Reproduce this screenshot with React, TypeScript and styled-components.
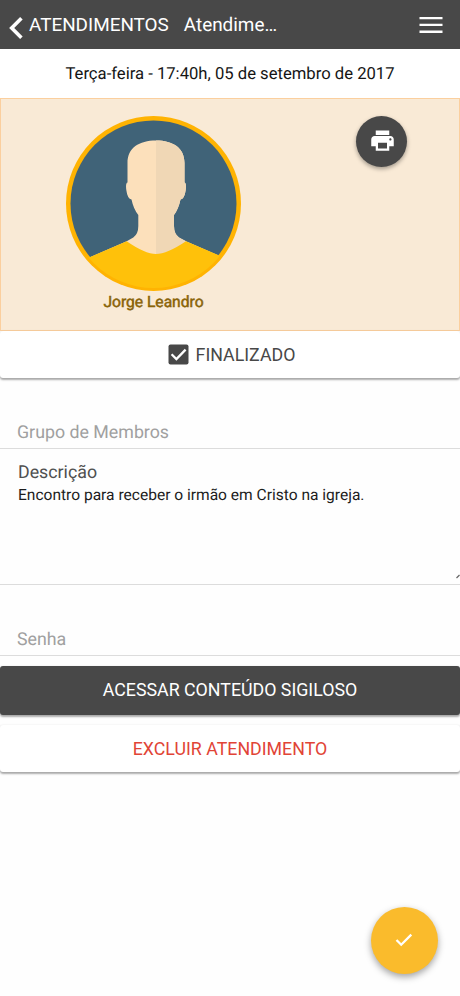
import React from "react";
import styled, { createGlobalStyle } from "styled-components";

const Global = createGlobalStyle`
  *, *::before, *::after { box-sizing: border-box; }
  html, body { margin: 0; padding: 0; background: #fff; }
  body { font-family: Roboto, "Liberation Sans", sans-serif; color: #1c1c1c; overflow: hidden; text-rendering: geometricPrecision; }
  button { font: inherit; border: 0; margin: 0; padding: 0; cursor: pointer; }
  svg { display: block; flex: none; }
`;

const Screen = styled.div`
  display: flex;
  flex-direction: column;
  width: 460px;
  height: 996px;
  background: #fefefe;
`;

const Text = styled.span<{ $size?: number }>`
  font-size: ${(p) => p.$size ?? 17.8}px;
  line-height: 24px;
  white-space: nowrap;
`;

const Header = styled.header`
  display: flex;
  align-items: center;
  height: 49px;
  padding: 0 17px 0 9px;
  background: #484848;
  color: #fff;
`;

const BackButton = styled.button`
  display: flex;
  align-items: center;
  gap: 6px;
  margin-right: 15px;
  height: 49px;
  background: none;
  color: inherit;
  svg { margin-top: 7px; }
`;

const MenuButton = styled.button`
  display: flex;
  margin-left: auto;
  background: none;
  color: inherit;
`;

const DateRow = styled.div`
  display: flex;
  align-items: center;
  justify-content: center;
  height: 49px;
  padding-top: 2px;
  background: #fff;
  color: #151515;
`;

const Profile = styled.section`
  display: grid;
  grid-template-columns: 305px 1fr;
  height: 233px;
  border: 1px solid #fbcf9e;
  background: #f9ead6;
`;

const Person = styled.div`
  display: flex;
  flex-direction: column;
  align-items: center;
  padding-top: 17px;
  color: #8a6409;
`;

const Name = styled(Text)`
  margin-top: 1px;
  line-height: 20px;
  -webkit-text-stroke: 0.5px currentColor;
`;

const PrintButton = styled.button`
  display: flex;
  align-items: center;
  justify-content: center;
  justify-self: start;
  width: 51px;
  height: 51px;
  margin: 17px 0 0 50px;
  border-radius: 50%;
  background: #484848;
  color: #fff;
  box-shadow: 0 2px 4px rgba(0, 0, 0, 0.35);
  svg { margin: -2px 0 0 1px; }
`;

const FlatButton = styled.button<{ $height: number; $color: string }>`
  display: flex;
  align-items: center;
  justify-content: center;
  gap: 7px;
  height: ${(p) => p.$height}px;
  padding-top: 1px;
  border-radius: 3px;
  background: #fff;
  color: ${(p) => p.$color};
  box-shadow: 0 2px 2px rgba(0, 0, 0, 0.32), 0 0 2px rgba(0, 0, 0, 0.1);
`;

const StatusButton = styled(FlatButton)`
  padding: 0 0 0 3px;
`;

const SolidButton = styled(FlatButton)`
  margin: 10px 0;
  padding: 0 0 1px;
  background: #484848;
`;

const Field = styled.div<{ $height: number }>`
  display: flex;
  align-items: flex-end;
  height: ${(p) => p.$height}px;
  padding: 0 17px 3px;
  border-bottom: 1px solid #dcdcdc;
  color: #a0a0a0;
`;

const Description = styled.div`
  display: flex;
  flex-direction: column;
  height: 136px;
  padding: 12px 0 5px 18px;
  border-bottom: 1px solid #dcdcdc;
`;

const Label = styled(Text)`
  color: #505050;
`;

const Body = styled(Text)`
  line-height: 20px;
`;

const Grip = styled.svg`
  margin: auto 0 0 auto;
`;

const SaveButton = styled.button`
  display: flex;
  align-items: center;
  justify-content: center;
  align-self: flex-end;
  width: 67px;
  height: 67px;
  margin: auto 22px 22px 0;
  padding: 0 2px 2px 0;
  border-radius: 50%;
  background: #fabb2c;
  color: #fff;
  box-shadow: 0 3px 7px rgba(0, 0, 0, 0.36);
`;

const Avatar = () => (
  <svg width="175" height="175" viewBox="0 0 175 175">
    <defs>
      <clipPath id="face">
        <circle cx="87.5" cy="87.5" r="83" />
      </clipPath>
      <clipPath id="shirt">
        <circle cx="87.5" cy="87.5" r="84.5" />
      </clipPath>
    </defs>
    <circle cx="87.5" cy="87.5" r="87.5" fill="#ffb302" />
    <g clipPath="url(#face)">
      <rect width="175" height="150" fill="#406378" />
      <path
        d="M20 143L60.7 125.3L67.3 121.5Q72.3 118 72.3 110V99Q67.5 93 65.5 83.5Q61.5 83 60.3 74Q59.4 67 61.5 66.5V47C61.5 32 73 24.6 90 24.6C107 24.6 118.5 32 118.5 47V66.5Q120.6 67 119.7 74Q118.5 83 114.5 83.5Q112.5 93 108 99V110Q108 118 113 121.5L120 125.3L156 141V150H20Z"
        fill="#fce0bb"
      />
      <path
        d="M90 24.6C107 24.6 118.5 32 118.5 47V66.5Q120.6 67 119.7 74Q118.5 83 114.5 83.5Q112.5 93 108 99V110Q108 118 113 121.5L120 125.3V140H90Z"
        fill="#f0d7b5"
      />
    </g>
    <path
      clipPath="url(#shirt)"
      d="M10 147L60.7 125.3Q79 138 90 138Q101 138 120 125.3L165 144.5V175H10Z"
      fill="#ffc10a"
    />
  </svg>
);

export default function App() {
  return (
    <>
      <Global />
      <Screen>
        <Header>
          <BackButton>
            <svg width="14" height="22" viewBox="0 0 14 22" fill="none" stroke="currentColor" strokeWidth="3.6">
              <path d="M12.4 1.3L2.7 11L12.4 20.7" />
            </svg>
            <Text $size={18.9}>ATENDIMENTOS</Text>
          </BackButton>
          <Text $size={18.9}>Atendime…</Text>
          <MenuButton aria-label="Menu">
            <svg width="24" height="18" viewBox="0 0 24 18" fill="currentColor">
              <path d="M.5 1H23.5V3.3H.5ZM.5 7.8H23.5V10.1H.5ZM.5 14.6H23.5V16.9H.5Z" />
            </svg>
          </MenuButton>
        </Header>
        <DateRow>
          <Text $size={16.65}>Terça-feira - 17:40h, 05 de setembro de 2017</Text>
        </DateRow>
        <Profile>
          <Person>
            <Avatar />
            <Name $size={15.6}>Jorge Leandro</Name>
          </Person>
          <PrintButton aria-label="Imprimir">
            <svg width="27" height="27" viewBox="0 0 24 24" fill="currentColor">
              <path d="M19 8H5c-1.66 0-3 1.34-3 3v6h4v4h12v-4h4v-6c0-1.66-1.34-3-3-3zm-3 11H8v-5h8v5zm3-7c-.55 0-1-.45-1-1s.45-1 1-1 1 .45 1 1-.45 1-1 1zm-1-9H6v4h12V3z" />
            </svg>
          </PrintButton>
        </Profile>
        <StatusButton $height={47} $color="#484848">
          <svg width="21" height="21" viewBox="0 0 21 21">
            <rect x=".5" y=".5" width="20" height="20" rx="2" fill="#484848" />
            <path d="M3.6 10.2L8.4 15L17.6 5.6" fill="none" stroke="#fff" strokeWidth="2.3" />
          </svg>
          <Text>FINALIZADO</Text>
        </StatusButton>
        <Field $height={71}>
          <Text>Grupo de Membros</Text>
        </Field>
        <Description>
          <Label>Descrição</Label>
          <Body $size={15.55}>Encontro para receber o irmão em Cristo na igreja.</Body>
          <Grip width="4" height="5" viewBox="0 0 4 5">
            <path d="M.5 4L3.5 1" stroke="#666" strokeWidth="1.3" />
          </Grip>
        </Description>
        <Field $height={71}>
          <Text>Senha</Text>
        </Field>
        <SolidButton $height={49} $color="#fff">
          <Text>ACESSAR CONTEÚDO SIGILOSO</Text>
        </SolidButton>
        <FlatButton $height={47} $color="#e14436">
          <Text>EXCLUIR ATENDIMENTO</Text>
        </FlatButton>
        <SaveButton aria-label="Salvar">
          <svg width="18" height="14" viewBox="0 0 18 14" fill="none" stroke="currentColor" strokeWidth="2.3">
            <path d="M1.5 7L6.2 11.7L16.3 1.6" />
          </svg>
        </SaveButton>
      </Screen>
    </>
  );
}
